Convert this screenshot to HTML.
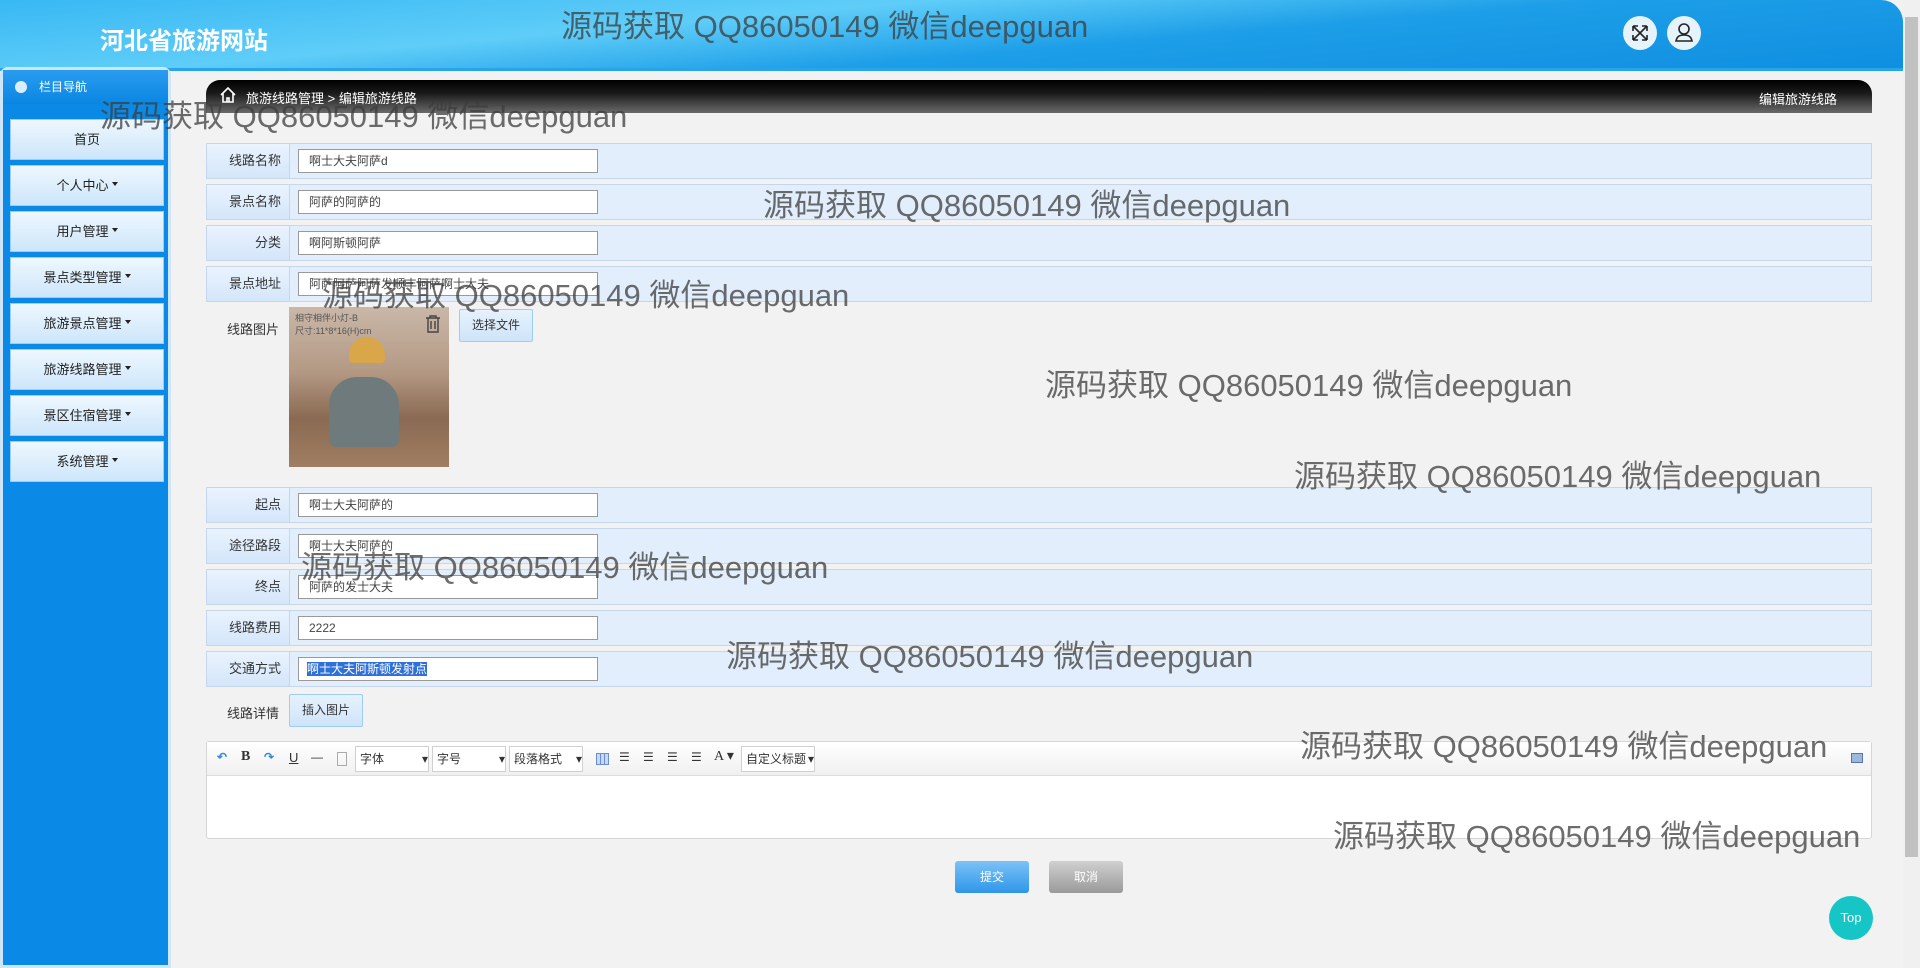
<!DOCTYPE html>
<html><head><meta charset="utf-8">
<style>
*{margin:0;padding:0;box-sizing:border-box}
body{width:1920px;height:968px;overflow:hidden;background:#f2f2f2;font-family:"Liberation Sans","Noto Sans CJK SC",sans-serif;font-size:12px;color:#333;position:relative}
.hdr{position:absolute;left:0;top:0;width:1903px;height:71px;border-top-right-radius:22px;background:linear-gradient(175deg,#38b8f4 0%,#5fcdf8 35%,#1d9ee8 60%,#0f8fe0 100%);border-bottom:3px solid #27a4ea}
.title{position:absolute;left:100px;top:21px;font-size:24px;font-weight:bold;color:#fff}
.ic{position:absolute;top:16px;width:34px;height:34px;border-radius:50%;background:#e6f3fb}
.scroll{position:absolute;right:0;top:0;width:17px;height:968px;background:#f0f0f0}
.scroll .th{position:absolute;left:2px;top:17px;width:13px;height:840px;background:#c1c1c1}
.side{position:absolute;left:0;top:67px;width:171px;height:901px;background:#0a8ae6;border:3px solid #cfe6f8;border-radius:8px 8px 0 0}
.side .h{height:34px;color:#fff;font-size:12px;line-height:34px;padding-left:36px;position:relative;background:linear-gradient(#2a9cf0,#0a86e2)}
.side .h:before{content:"";position:absolute;left:12px;top:11px;width:12px;height:12px;border-radius:50%;background:#d9eefc}
.mi{position:absolute;left:10px;width:154px;height:41px;background:linear-gradient(#eef7fe,#cde6fb);border:1px solid #9ccdf3;text-align:center;line-height:40px;font-size:13px;color:#222}
.mi .c{display:inline-block;border:3px solid transparent;border-top:4px solid #222;margin-left:3px;vertical-align:1px}
.bc{position:absolute;left:206px;top:80px;width:1666px;height:33px;border-radius:14px 14px 0 0;background:linear-gradient(#000 0%,#1a1a1a 40%,#6a6a6a 100%);color:#fff;font-size:13px}
.row{position:absolute;left:206px;width:1666px;height:36px;background:#e2eefc;border:1px solid #c4d7ee}
.lab{position:absolute;left:0;top:0;width:83px;height:34px;background:linear-gradient(#eaf3fe,#d4e6fa);border-right:1px solid #c4d7ee;text-align:right;padding-right:8px;line-height:34px;font-size:13px;color:#333}
.inp{position:absolute;left:91px;top:5px;width:300px;height:24px;background:#fff;border:1px solid #999;font-size:12px;line-height:22px;padding-left:10px;color:#444}
.pl{position:absolute;font-size:13px;color:#333}
.btn{position:absolute;height:33px;border:1px solid #9ccdf3;background:linear-gradient(#e6f2fd,#cfe4f9);font-size:12px;line-height:31px;text-align:center;border-radius:2px}
.wm{position:absolute;font-size:31px;color:rgba(60,60,60,.75);white-space:nowrap;font-family:"Liberation Sans","Noto Sans CJK SC",sans-serif}
.ed{position:absolute;left:206px;top:741px;width:1666px;height:98px;background:#fff;border:1px solid #d6d6d6;border-radius:3px}
.tb{height:34px;background:linear-gradient(#fff,#f0f0f0);border-bottom:1px solid #ddd;position:relative;font-size:12px}
.tb span{position:absolute;top:8px}
.sel{position:absolute;top:4px;height:26px;border:1px solid #d0d0d0;background:#fff;line-height:24px;padding-left:4px;font-size:12px}
</style></head><body>
<div class="hdr">
<div class="title">河北省旅游网站</div>
<div class="ic" style="left:1623px"><svg width="34" height="34" viewBox="0 0 34 34" fill="none" stroke="#222" stroke-width="1.6"><path d="M10 10l14 14M24 10L10 24M10 10h5M10 10v5M24 10h-5M24 10v5M10 24h5M10 24v-5M24 24h-5M24 24v-5"/></svg></div>
<div class="ic" style="left:1667px"><svg width="34" height="34" viewBox="0 0 34 34" fill="none" stroke="#222" stroke-width="1.6"><circle cx="17" cy="13" r="5"/><path d="M9 25c1-5 4-6 8-6s7 1 8 6z"/></svg></div>
</div>
<div class="scroll"><div class="th"></div></div>
<div class="side"><div class="h">栏目导航</div></div>
<div class="mi" style="top:119px">首页</div>
<div class="mi" style="top:165px">个人中心<i class="c"></i></div>
<div class="mi" style="top:211px">用户管理<i class="c"></i></div>
<div class="mi" style="top:257px">景点类型管理<i class="c"></i></div>
<div class="mi" style="top:303px">旅游景点管理<i class="c"></i></div>
<div class="mi" style="top:349px">旅游线路管理<i class="c"></i></div>
<div class="mi" style="top:395px">景区住宿管理<i class="c"></i></div>
<div class="mi" style="top:441px">系统管理<i class="c"></i></div>

<div class="bc">
<svg style="position:absolute;left:13px;top:6px" width="18" height="18" viewBox="0 0 18 18" fill="none" stroke="#fff" stroke-width="1.6"><path d="M2 9L9 2l7 7M4 7v9h10V7M8 16v-4h2v4"/></svg>
<span style="position:absolute;left:40px;top:8px">旅游线路管理 &gt; 编辑旅游线路</span>
<span style="position:absolute;right:35px;top:9px">编辑旅游线路</span>
</div>

<div class="row" style="top:143px"><div class="lab">线路名称</div><div class="inp">啊士大夫阿萨d</div></div>
<div class="row" style="top:184px"><div class="lab">景点名称</div><div class="inp">阿萨的阿萨的</div></div>
<div class="row" style="top:225px"><div class="lab">分类</div><div class="inp">啊阿斯顿阿萨</div></div>
<div class="row" style="top:266px"><div class="lab">景点地址</div><div class="inp">阿萨阿萨阿萨发顺丰阿萨啊士大夫</div></div>

<div class="pl" style="left:227px;top:319px">线路图片</div>
<div style="position:absolute;left:289px;top:307px;width:160px;height:160px;background:linear-gradient(180deg,#c9b7a8 0%,#b49a85 40%,#8a6a52 70%,#a07e63 100%)">
<div style="position:absolute;left:60px;top:30px;width:36px;height:26px;background:#d9a64a;border-radius:18px 18px 4px 4px"></div>
<div style="position:absolute;left:40px;top:70px;width:70px;height:70px;background:#6f7a7c;border-radius:40% 40% 10% 10%"></div>
<span style="position:absolute;left:6px;top:4px;font-size:9px;color:#555">相守相伴小灯-B<br>尺寸:11*8*16(H)cm</span>
</div>
<svg style="position:absolute;left:424px;top:314px" width="18" height="20" viewBox="0 0 18 20" fill="none" stroke="#444" stroke-width="1.4"><path d="M2 4h14M6 4V2h6v2M4 4v14h10V4M7 7v8M11 7v8"/></svg>
<div class="btn" style="left:459px;top:309px;width:74px">选择文件</div>

<div class="row" style="top:487px"><div class="lab">起点</div><div class="inp">啊士大夫阿萨的</div></div>
<div class="row" style="top:528px"><div class="lab">途径路段</div><div class="inp">啊士大夫阿萨的</div></div>
<div class="row" style="top:569px"><div class="lab">终点</div><div class="inp">阿萨的发士大夫</div></div>
<div class="row" style="top:610px"><div class="lab">线路费用</div><div class="inp">2222</div></div>
<div class="row" style="top:651px"><div class="lab">交通方式</div><div class="inp"><span style="background:#2f6fd8;color:#fff;margin-left:-2px">啊士大夫阿斯顿发射点</span></div></div>

<div class="pl" style="left:227px;top:703px">线路详情</div>
<div class="btn" style="left:289px;top:694px;width:74px">插入图片</div>

<div class="ed"><div class="tb">
<span style="left:10px;color:#3a8ad8;font-weight:bold">↶</span>
<span style="left:34px;font-family:'Liberation Serif';font-weight:bold;font-size:14px;top:7px">B</span>
<span style="left:57px;color:#3a8ad8;font-weight:bold">↷</span>
<span style="left:82px;text-decoration:underline;font-size:13px">U</span>
<span style="left:104px">—</span>
<span style="left:130px;width:10px;height:14px;border:1px solid #aaa;top:10px"></span>
<div class="sel" style="left:148px;width:74px">字体<span style="left:66px;top:0">▾</span></div>
<div class="sel" style="left:225px;width:74px">字号<span style="left:66px;top:0">▾</span></div>
<div class="sel" style="left:302px;width:74px">段落格式<span style="left:66px;top:0">▾</span></div>
<span style="left:389px;width:13px;height:12px;border:1px solid #6a8ed0;top:11px;background:repeating-linear-gradient(90deg,#c8d8f0 0 3px,#6a8ed0 3px 4px)"></span>
<span style="left:412px">☰</span><span style="left:436px">☰</span><span style="left:460px">☰</span><span style="left:484px">☰</span>
<span style="left:507px;font-family:'Liberation Serif';font-size:14px;top:6px">A ▾</span>
<div class="sel" style="left:534px;width:74px">自定义标题<span style="left:66px;top:0">▾</span></div>
<span style="right:8px;width:12px;height:10px;border:1px solid #5577aa;background:#9bb8e0;top:11px"></span>
</div></div>

<div style="position:absolute;left:955px;top:861px;width:74px;height:32px;border-radius:3px;background:linear-gradient(#7cc2f6,#2e96ea);color:#fff;text-align:center;line-height:32px;font-size:12px">提交</div>
<div style="position:absolute;left:1049px;top:861px;width:74px;height:32px;border-radius:3px;background:linear-gradient(#d0d0d0,#9a9a9a);color:#fff;text-align:center;line-height:32px;font-size:12px">取消</div>
<div style="position:absolute;left:1829px;top:896px;width:44px;height:44px;border-radius:50%;background:#16c6c6;color:#fff;text-align:center;line-height:44px;font-size:13px">Top</div>

<div class="wm" style="left:561px;top:1px">源码获取 QQ86050149 微信deepguan</div>
<div class="wm" style="left:100px;top:91px">源码获取 QQ86050149 微信deepguan</div>
<div class="wm" style="left:763px;top:180px">源码获取 QQ86050149 微信deepguan</div>
<div class="wm" style="left:322px;top:270px">源码获取 QQ86050149 微信deepguan</div>
<div class="wm" style="left:1045px;top:360px">源码获取 QQ86050149 微信deepguan</div>
<div class="wm" style="left:1294px;top:451px">源码获取 QQ86050149 微信deepguan</div>
<div class="wm" style="left:301px;top:542px">源码获取 QQ86050149 微信deepguan</div>
<div class="wm" style="left:726px;top:631px">源码获取 QQ86050149 微信deepguan</div>
<div class="wm" style="left:1300px;top:721px">源码获取 QQ86050149 微信deepguan</div>
<div class="wm" style="left:1333px;top:811px">源码获取 QQ86050149 微信deepguan</div>
</body></html>
